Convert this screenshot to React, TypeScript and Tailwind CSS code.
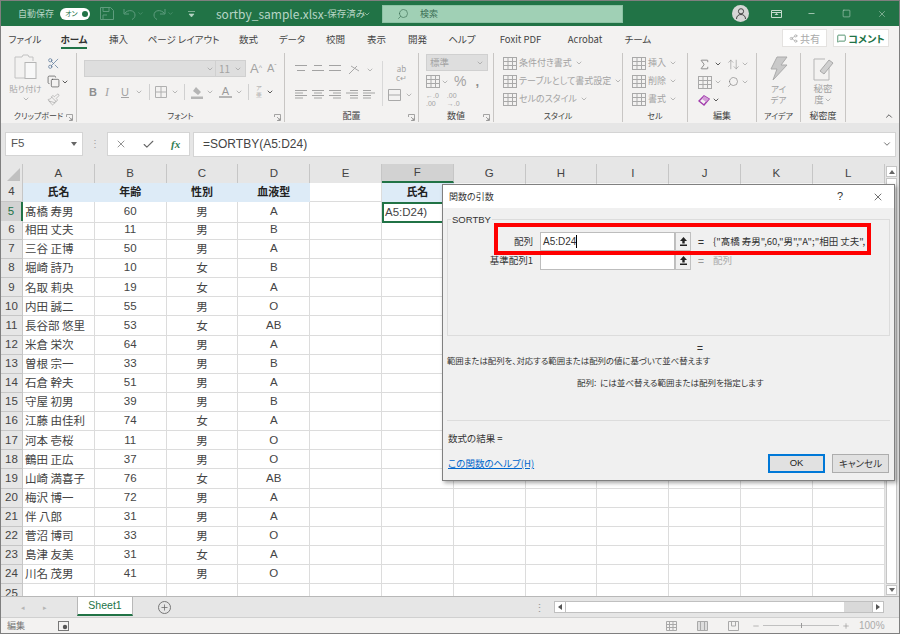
import React from 'react';
import { ChevronDown, Scissors, Copy, Paintbrush, Search, X, Check, Minus, Square, ChevronUp, Sigma, ArrowUpDown, Plus, MessageSquare, Share2 } from 'lucide-react';

const font = "[font-family:'Noto_Sans_CJK_JP','Liberation_Sans',sans-serif]";

const tabs: [string, string][] = [
  ['ファイル', 'w-[28px]'],
  ['ホーム', 'w-[26px]'],
  ['挿入', 'w-[19px]'],
  ['ページ レイアウト', 'w-[67px]'],
  ['数式', 'w-[19px]'],
  ['データ', 'w-[24px]'],
  ['校閲', 'w-[19px]'],
  ['表示', 'w-[19px]'],
  ['開発', 'w-[19px]'],
  ['ヘルプ', 'w-[26px]'],
  ['Foxit PDF', 'w-[47px]'],
  ['Acrobat', 'w-[38px]'],
  ['チーム', 'w-[24px]'],
];

const people: [string, string, string, string][] = [
  ['髙橋 寿男', '60', '男', 'A'],
  ['相田 丈夫', '11', '男', 'B'],
  ['三谷 正博', '50', '男', 'A'],
  ['堀崎 詩乃', '10', '女', 'B'],
  ['名取 莉央', '19', '女', 'A'],
  ['内田 誠二', '55', '男', 'O'],
  ['長谷部 悠里', '53', '女', 'AB'],
  ['米倉 栄次', '64', '男', 'A'],
  ['曽根 宗一', '33', '男', 'B'],
  ['石倉 幹夫', '51', '男', 'A'],
  ['守屋 初男', '39', '男', 'B'],
  ['江藤 由佳利', '74', '女', 'A'],
  ['河本 壱桜', '11', '男', 'O'],
  ['鶴田 正広', '37', '男', 'O'],
  ['山崎 満喜子', '76', '女', 'AB'],
  ['梅沢 博一', '72', '男', 'A'],
  ['伴 八郎', '31', '男', 'A'],
  ['菅沼 博司', '33', '男', 'O'],
  ['島津 友美', '31', '女', 'A'],
  ['川名 茂男', '41', '男', 'O'],
];

const columns = ['A', 'B', 'C', 'D', 'E', 'F', 'G', 'H', 'I', 'J', 'K', 'L'];
const headRow = ['氏名', '年齢', '性別', '血液型'];
const gridCols = 'grid grid-cols-[22px_repeat(12,71.8px)]';

const Chev = ({ className = '' }: { className?: string }) => (
  <ChevronDown size={8} strokeWidth={2} className={`shrink-0 text-[#9a9a9a] ${className}`} />
);

// 横線を並べた配置アイコン
const LinesIcon = ({ rows }: { rows: [number, number][] }) => (
  <svg width="12" height="12" viewBox="0 0 12 12" className="shrink-0">
    {rows.map(([x, w], i) => (
      <rect key={i} x={x} y={1 + i * (10 / Math.max(rows.length, 1))} width={w} height="1" fill="#a3a3a3" />
    ))}
  </svg>
);

const BoxIcon = ({ tone = '#a9a9a9' }: { tone?: string }) => (
  <svg width="14" height="13" viewBox="0 0 14 13" className="shrink-0">
    <rect x="0.5" y="0.5" width="13" height="12" fill="none" stroke={tone} />
    <path d="M0 4.5h14M0 8.5h14M5 0v13M9.5 0v13" stroke={tone} strokeWidth="1" />
  </svg>
);

const Group = ({ width, label, launcher, small, children }: { width: string; label: string; launcher?: boolean; small?: boolean; children: React.ReactNode }) => (
  <div className={`${width} flex flex-col shrink-0 border-r border-[#c8c6c4] h-[69px] my-auto`}>
    <div className="flex-1 min-h-0">{children}</div>
    <div className={`relative h-[14px] pt-[1px] text-center leading-[14px] text-[#444] whitespace-nowrap ${small ? 'text-[8px]' : 'text-[9px]'}`}>
      {label}
      {launcher && (
        <svg width="7" height="7" viewBox="0 0 7 7" className="absolute right-[3px] bottom-[1px]">
          <path d="M0.5 3V0.5H6.5V6.5H3M3 3l3 3M4 6h2V4" fill="none" stroke="#8f8f8f" strokeWidth="0.8" />
        </svg>
      )}
    </div>
  </div>
);

const RibbonLine = ({ text, tone = '#a9a9a9' }: { text: string; tone?: string }) => (
  <div className="flex items-center gap-[2px] h-[18px] text-[9px] whitespace-nowrap text-[#a3a3a3]">
    <BoxIcon tone={tone} />
    <span>{text}</span>
    <Chev className="ml-[1px]" />
  </div>
);

const Ribbon = () => (
  <div className="flex h-[71px] bg-[#f3f2f1] pl-0 shadow-[0_1px_2px_rgba(0,0,0,0.25)]">
    <Group width="w-[76px]" label="クリップボード" launcher small>
      <div className="flex pl-[9px] pt-[1px] gap-[6px]">
        <div className="flex flex-col items-center w-[31px] text-[#a8a8a8]">
          <svg width="24" height="26" viewBox="0 0 24 26">
            <path d="M4 3h4l1-2h5l1 2h4v4M12 24H1V3h3" fill="none" stroke="#c2c2c2" strokeWidth="1" />
            <rect x="11" y="8.5" width="11" height="16" fill="#f8f8f8" stroke="#b5b5b5" />
          </svg>
          <span className="text-[8.5px] leading-[12px] mt-[2px] whitespace-nowrap">貼り付け</span>
          <Chev className="mt-[1px]" />
        </div>
        <div className="flex flex-col gap-[5px] pt-[3px]">
          <Scissors size={13} className="text-[#4a6a90]" strokeWidth={1.2} />
          <div className="flex items-center gap-[1px]">
            <Copy size={13} className="text-[#444]" strokeWidth={1.2} />
            <ChevronDown size={8} className="text-[#333]" strokeWidth={2.4} />
          </div>
          <Paintbrush size={13} className="text-[#a3a3a3]" strokeWidth={1.2} />
        </div>
      </div>
    </Group>
    <Group width="w-[208px]" label="フォント" launcher small>
      <div className="pl-[7px] pt-[7px]">
        <div className="flex items-center h-[17px]">
          <div className="w-[132px] h-[17px] bg-[#dedede] border border-[#d0d0d0] flex items-center justify-end pr-[1px]"><Chev /></div>
          <div className="w-[30px] h-[17px] bg-[#dedede] border border-[#d0d0d0] border-l-0 flex items-center justify-between px-[3px] text-[10px] text-[#a3a3a3]"><span>11</span><Chev /></div>
          <span className="ml-[4px] text-[13px] text-[#a3a3a3] leading-none font-['Liberation_Sans']">A<sup className="text-[7px]">^</sup></span>
          <span className="ml-[5px] text-[11px] text-[#a3a3a3] leading-none font-['Liberation_Sans']">A<sup className="text-[7px]">ˇ</sup></span>
        </div>
        <div className="flex items-center h-[18px] mt-[6px] pl-[5px] text-[#a3a3a3] text-[11px] font-['Liberation_Sans']">
          <b className="w-[16px] text-[#8f8f8f]">B</b>
          <i className="w-[16px] font-['Liberation_Serif'] text-[12px]">I</i>
          <u className="w-[14px]">U</u>
          <Chev />
          <div className="w-px h-[16px] bg-[#d0d0d0] ml-[6px] mr-[5px]" />
          <svg width="12" height="12" viewBox="0 0 12 12"><path d="M0.5.5h11v11H.5zM6 0v12M0 6h12" fill="none" stroke="#b0b0b0" /></svg>
          <Chev className="ml-[4px]" />
          <div className="w-px h-[16px] bg-[#d0d0d0] ml-[5px] mr-[5px]" />
          <svg width="13" height="13" viewBox="0 0 13 13"><path d="M6 1l5 5-3 3-5-4zM1 10.5h12V13H1z" fill="#b5b5b5" /></svg>
          <Chev className="ml-[3px]" />
          <div className="flex flex-col items-center w-[13px] ml-[5px] leading-[10px] text-[#9a9a9a]"><span>A</span><div className="w-full h-[2px] bg-[#b5b5b5]" /></div>
          <Chev className="ml-[3px]" />
          <div className="w-px h-[16px] bg-[#d0d0d0] ml-[5px] mr-[7px]" />
          <span className="flex flex-col text-[6px] leading-[7px] text-center">ア<span>亜</span></span>
          <ChevronDown size={8} className="ml-[4px] text-[#333]" strokeWidth={2.4} />
        </div>
      </div>
    </Group>
    <Group width="w-[134px]" label="配置" launcher>
      <div className="flex pl-[10px] pt-[8px]">
        <div className="flex flex-col gap-[9px] w-[86px]">
          <div className="flex items-center gap-[5px] h-[17px]">
            <LinesIcon rows={[[0, 12], [2, 8]]} />
            <LinesIcon rows={[[2, 8], [0, 12]]} />
            <LinesIcon rows={[[0, 12], [0, 12]]} />
            <svg width="13" height="12" viewBox="0 0 13 12" className="ml-[2px]"><path d="M1 10L9 2M3 2l8 5" fill="none" stroke="#a9a9a9" /></svg>
            <Chev />
          </div>
          <div className="flex items-center gap-[5px] h-[16px]">
            <LinesIcon rows={[[0, 12], [0, 8], [0, 12], [0, 8]]} />
            <LinesIcon rows={[[0, 12], [2, 8], [0, 12], [2, 8]]} />
            <LinesIcon rows={[[0, 12], [4, 8], [0, 12], [4, 8]]} />
            <LinesIcon rows={[[4, 8], [0, 12], [4, 8], [4, 8]]} />
            <LinesIcon rows={[[0, 8], [0, 12], [0, 8], [0, 8]]} />
          </div>
        </div>
        <div className="w-px h-[45px] bg-[#d8d8d8] ml-[1px] mr-[5px]" />
        <div className="flex flex-col gap-[7px]">
          <span className="text-[8px] leading-[9px] text-[#a3a3a3] text-center pl-[2px] pt-[3px]">ab<br />c↵</span>
          <div className="flex items-center gap-[4px]">
            <svg width="13" height="12" viewBox="0 0 13 12"><path d="M.5.5h12v11H.5zM0 6h13" fill="none" stroke="#a9a9a9" /></svg>
            <Chev />
          </div>
        </div>
      </div>
    </Group>
    <Group width="w-[75px]" label="数値" launcher>
      <div className="pl-[7px] pt-[1px] text-[#a3a3a3]">
        <div className="w-[62px] h-[17px] bg-[#dedede] border border-[#d0d0d0] flex items-center justify-between px-[3px] text-[9.5px]"><span>標準</span><Chev /></div>
        <div className="flex items-center h-[19px] mt-[1px] text-[13px] font-['Liberation_Sans']">
          <BoxIcon />
          <Chev className="ml-[1px]" />
          <span className="ml-[5px] text-[14px]">%</span>
          <span className="ml-[9px] font-bold text-[#8f8f8f]">,</span>
        </div>
        <div className="flex text-[7px] leading-[8px] h-[17px] items-center gap-[8px] font-['Liberation_Sans']">
          <span>←.0<br />.00</span>
          <span>.00<br />→.0</span>
        </div>
      </div>
    </Group>
    <Group width="w-[129px]" label="スタイル" small>
      <div className="pl-[9px] pt-[1px]">
        <RibbonLine text="条件付き書式" />
        <RibbonLine text="テーブルとして書式設定" />
        <RibbonLine text="セルのスタイル" />
      </div>
    </Group>
    <Group width="w-[65px]" label="セル" small>
      <div className="pl-[9px] pt-[1px]">
        <RibbonLine text="挿入" />
        <RibbonLine text="削除" />
        <RibbonLine text="書式" />
      </div>
    </Group>
    <Group width="w-[69px]" label="編集">
      <div className="grid grid-cols-[29px_1fr] pl-[10px] pt-[2px] auto-rows-[18px] items-center text-[#555]">
        <div className="flex items-center gap-[3px]"><Sigma size={13} strokeWidth={1.2} /><ChevronDown size={8} strokeWidth={2.4} className="text-[#333]" /></div>
        <div className="flex items-center gap-[1px]"><ArrowUpDown size={13} strokeWidth={1.2} className="text-[#999]" /><Chev /></div>
        <div className="flex items-center gap-[2px]"><BoxIcon /><Chev /></div>
        <div className="flex items-center gap-[2px]"><Search size={12} strokeWidth={1.2} className="text-[#777] -scale-x-100" /><Chev /></div>
        <div className="flex items-center gap-[2px]">
          <svg width="12" height="11" viewBox="0 0 12 11"><path d="M1 6l5-5 5 3-5 6z" fill="none" stroke="#a23dad" strokeWidth="1.4" /><path d="M6 1l5 3-3 3-4-3z" fill="#d39cd8" /></svg>
          <ChevronDown size={8} strokeWidth={2.4} className="text-[#333]" />
        </div>
      </div>
    </Group>
    <Group width="w-[44px]" label="アイデア" small>
      <div className="flex flex-col items-center pt-[3px] text-[8.5px] leading-[11px] text-[#a3a3a3]">
        <svg width="18" height="25" viewBox="0 0 18 25"><path d="M7 1h10L11 9h6L3 24l4-11H1z" fill="#c9c9c9" stroke="#ababab" /></svg>
        <span className="mt-[2px]">アイ</span>
        <span>デア</span>
      </div>
    </Group>
    <Group width="w-[45px]" label="秘密度">
      <div className="flex flex-col items-center pt-[3px] text-[9.5px] leading-[11px] text-[#a3a3a3]">
        <svg width="21" height="25" viewBox="0 0 21 25"><path d="M1 3h11M1 3v21h15V11" fill="none" stroke="#b5b5b5" /><path d="M7 15l9-11 4 3-9 11z" fill="#d0d0d0" stroke="#a9a9a9" /></svg>
        <span className="mt-[2px]">秘密</span>
        <span className="flex items-center">度<Chev /></span>
      </div>
    </Group>
    <div className="flex-1 flex items-end justify-end pr-[5px] pb-[2px]">
      <ChevronUp size={10} strokeWidth={2} className="text-[#444]" />
    </div>
  </div>
);

const FormulaBar = () => (
  <div className="flex items-center h-[34px] bg-[#e6e6e6] pt-[9px] pb-[1px] pl-[4px] pr-[3px] shrink-0">
    <div className="w-[78px] h-[24px] bg-white border border-[#d4d4d4] flex items-center justify-between pl-[5px] pr-[5px] text-[11.5px] text-[#555] font-['Liberation_Sans']">
      <span>F5</span>
      <svg width="6" height="4" viewBox="0 0 6 4"><path d="M0 0h6L3 4z" fill="#666" /></svg>
    </div>
    <span className="w-[24px] text-center text-[#a0a0a0] text-[10px] leading-[4px] pb-[2px]">⋮</span>
    <div className="w-[83px] h-[24px] bg-white border border-[#d4d4d4] flex items-center pl-[7px] text-[#666]">
      <X size={12} strokeWidth={1.4} />
      <Check size={13} strokeWidth={2} className="ml-[15px]" />
      <i className="ml-[16px] text-[11px] font-['Liberation_Serif'] font-bold text-[#2e7d52]">fx</i>
    </div>
    <div className="flex-1 h-[25px] ml-[3px] bg-white border border-[#d4d4d4] flex items-center justify-between pl-[9px] pr-[3px] text-[12px] text-[#444] font-['Liberation_Sans']">
      <span>=SORTBY(A5:D24)</span>
      <ChevronDown size={10} strokeWidth={2} className="text-[#555]" />
    </div>
  </div>
);

const Sheet = () => (
  <div className="flex-1 min-h-0 flex bg-[#e6e6e6] pt-[7px] overflow-hidden">
    <div className="w-[884px] overflow-hidden text-[11.5px]">
      <div className={`${gridCols} h-[18.5px] bg-[#e6e6e6] font-['Liberation_Sans'] text-[#444]`}>
        <div className="border-r border-[#c6c6c6] flex items-end justify-end pr-[2px] pb-[2px]">
          <svg width="13" height="13" viewBox="0 0 13 13"><path d="M13 0v13H0z" fill="#c0c0c0" /></svg>
        </div>
        {columns.map((c) => (
          <div key={c} className={`flex items-center justify-center border-r border-[#c6c6c6] ${c === 'F' ? 'bg-[#d2d2d2] border-b-2 border-b-[#217346]' : ''}`}>{c}</div>
        ))}
      </div>
      {/* 4行目(見出し) */}
      <div className={`${gridCols} h-[19.14px] bg-white`}>
        <div className="bg-[#e6e6e6] border-r border-b border-[#c6c6c6] flex items-center justify-center text-[#444] font-['Liberation_Sans']">4</div>
        {columns.map((c, i) => {
          const label = i < 4 ? headRow[i] : c === 'F' ? '氏名' : '';
          const blue = i < 4 || c === 'F';
          return (
            <div key={c} className={`flex items-center justify-center border-r border-b font-bold text-[11px] text-[#222] ${blue ? 'bg-[#ddebf7] border-[#ddebf7]' : 'border-[#dcdcdc]'}`}>{label}</div>
          );
        })}
      </div>
      {Array.from({ length: 21 }, (_, n) => {
        const row = n + 5;
        const data = people[n];
        return (
          <div key={row} className={`${gridCols} h-[19.14px] bg-white text-[#444]`}>
            <div className={`border-r border-b border-[#c6c6c6] flex items-center justify-center text-[11.5px] font-['Liberation_Sans'] ${row === 5 ? 'bg-[#d2d2d2] border-r-2 border-r-[#217346] text-[#217346]' : 'bg-[#e6e6e6]'}`}>{row}</div>
            {columns.map((c, i) => {
              const selected = row === 5 && c === 'F';
              const value = data && i < 4 ? data[i] : '';
              if (selected) {
                return (
                  <div key={c} className="flex items-center border-2 border-[#217346] pl-[1px] whitespace-nowrap font-['Liberation_Sans']">A5:D24)</div>
                );
              }
              return (
                <div key={c} className={`flex items-center border-r border-b border-[#dcdcdc] whitespace-nowrap ${i === 0 ? 'pl-[2px]' : 'justify-center'} ${i === 1 || i === 3 ? "font-['Liberation_Sans']" : ''}`}>
                  {value}
                </div>
              );
            })}
          </div>
        );
      })}
    </div>
    <div className="flex-1 flex flex-col gap-[1px] pl-[1px] pr-[2px] pt-[2px] pb-[1px]">
      <div className="h-[11px] bg-white border border-[#c6c6c6] flex items-center justify-center">
        <svg width="6" height="4" viewBox="0 0 6 4"><path d="M3 0l3 4H0z" fill="#666" /></svg>
      </div>
      <div className="flex-1 bg-white border border-[#c6c6c6]" />
      <div className="h-[10px] bg-white border border-[#c6c6c6] flex items-center justify-center">
        <svg width="6" height="4" viewBox="0 0 6 4"><path d="M0 0h6L3 4z" fill="#666" /></svg>
      </div>
    </div>
  </div>
);

const TabBar = () => (
  <div className="flex items-center h-[21px] bg-[#e6e6e6] border-t border-[#b8b8b8] text-[#b5b5b5] shrink-0">
    <span className="ml-[20px] text-[7px]">◂</span>
    <span className="ml-[18px] text-[7px]">▸</span>
    <div className="ml-[30px] w-[56px] h-[19px] self-start bg-white border-x border-[#b8b8b8] border-b-2 border-b-[#217346] flex items-center justify-center text-[10.5px] text-[#217346] font-['Liberation_Sans']">Sheet1</div>
    <div className="ml-[25px] w-[13px] h-[13px] rounded-full border border-[#777] flex items-center justify-center text-[#666]"><Plus size={9} strokeWidth={2} /></div>
    <span className="ml-[363px] text-[#999] text-[11px]">⋮</span>
    <div className="ml-[9px] flex h-[12px] w-[330px] border border-[#c0c0c0] bg-[#d9d9d9]">
      <div className="w-[11px] bg-white border-r border-[#c0c0c0] flex items-center justify-center">
        <svg width="4" height="6" viewBox="0 0 4 6"><path d="M4 0v6L0 3z" fill="#555" /></svg>
      </div>
      <div className="w-[278px] bg-white" />
      <div className="flex-1" />
      <div className="w-[11px] bg-white border-l border-[#c0c0c0] flex items-center justify-center">
        <svg width="4" height="6" viewBox="0 0 4 6"><path d="M0 0v6l4-3z" fill="#555" /></svg>
      </div>
    </div>
  </div>
);

const StatusBar = () => (
  <div className="flex items-center h-[16px] bg-[#f3f2f1] border-t border-[#d0d0d0] text-[#777] text-[9px] shrink-0">
    <span className="ml-[6px] w-[51px]">編集</span>
    <svg width="11" height="10" viewBox="0 0 11 10"><rect x=".5" y=".5" width="10" height="9" fill="none" stroke="#777" /><circle cx="7" cy="6" r="2.2" fill="#555" /></svg>
    <div className="ml-[597px] flex items-center gap-[20px] text-[#999]">
      <svg width="11" height="10" viewBox="0 0 11 10"><path d="M.5.5h10v9H.5zM0 3.5h11M0 6.5h11M3.5 0v10M7 0v10" fill="none" stroke="#a9a9a9" /></svg>
      <svg width="11" height="10" viewBox="0 0 11 10"><path d="M.5.5h10v9H.5zM3.5 0v10M7.5 0v10" fill="#ddd" stroke="#a9a9a9" /></svg>
      <svg width="11" height="10" viewBox="0 0 11 10"><path d="M.5.5h10v9H.5zM3.5 0v5h4V0" fill="none" stroke="#a9a9a9" /></svg>
    </div>
    <Minus size={8} className="ml-[13px] text-[#999]" />
    <div className="relative ml-[3px] w-[76px] h-px bg-[#c0c0c0]">
      <div className="absolute left-[38px] -top-[2px] w-px h-[5px] bg-[#999]" />
    </div>
    <Plus size={8} className="ml-[3px] text-[#999]" />
    <span className="ml-[9px] text-[#aaa] font-['Liberation_Sans'] text-[10px]">100%</span>
  </div>
);

const RefButton = () => (
  <div className="w-[16px] h-[19px] bg-[#f0f0f0] border border-[#c0c0c0] flex items-center justify-center">
    <svg width="9" height="9" viewBox="0 0 9 9"><path d="M4.5 0L8 4H5.7v2.5H3.3V4H1zM1 7.5h7V9H1z" fill="#222" /></svg>
  </div>
);

const ArgDialog = () => (
  <div className="absolute left-[441px] top-[183px] w-[453px] h-[297px] border border-[#808080] bg-[#f0f0f0] shadow-[2px_2px_4px_rgba(0,0,0,0.35)] text-[#333] text-[8.5px]">
    <div className="flex items-center h-[23px] bg-white pl-[6px] text-[9px]">
      <span className="flex-1">関数の引数</span>
      <span className="mr-[29px] text-[11px] font-['Liberation_Sans']">?</span>
      <X size={12} strokeWidth={1.4} className="mr-[10px]" />
    </div>
    <div className="relative mx-[4px] mt-[11px] h-[117px] border border-[#dcdcdc] pt-[12px]">
      <span className="absolute left-[3px] -top-[6px] bg-[#f0f0f0] px-[1px] text-[9.5px] leading-[11px] font-['Liberation_Sans']">SORTBY</span>
      <div className="flex items-center h-[19px]">
        <span className="w-[85px] text-right text-[9.5px]">配列</span>
        <div className="ml-[7px] w-[135px] h-[19px] bg-white border border-[#bdbdbd] pl-[2px] flex items-center text-[10px] font-['Liberation_Sans']">
          A5:D24<span className="w-px h-[13px] bg-black" />
        </div>
        <RefButton />
        <span className="ml-[7px] w-[15px] font-bold text-[10px]">=</span>
        <span className="whitespace-nowrap text-[9.5px]">{'{"髙橋 寿男",60,"男","A";"相田 丈夫",'}</span>
      </div>
      <div className="flex items-center h-[19px]">
        <span className="w-[85px] text-right text-[9.5px]">基準配列1</span>
        <div className="ml-[7px] w-[135px] h-[19px] bg-white border border-[#bdbdbd]" />
        <RefButton />
        <span className="ml-[7px] w-[15px] font-bold text-[10px] text-[#999]">=</span>
        <span className="text-[#aaa] text-[9.5px]">配列</span>
      </div>
    </div>
    <div className="pl-[254px] mt-[6px] h-[12px] leading-[12px] font-bold text-[10px]">=</div>
    <div className="pl-[4px] whitespace-nowrap leading-[12px] text-[8.4px]">範囲または配列を、対応する範囲または配列の値に基づいて並べ替えます</div>
    <div className="pl-[134px] mt-[10px] whitespace-nowrap leading-[12px]">配列:&nbsp;&nbsp;には並べ替える範囲または配列を指定します</div>
    <div className="mx-[4px] mt-[32px] h-px bg-[#dcdcdc]" />
    <div className="pl-[5px] mt-[11px] leading-[12px] text-[9.5px]">数式の結果 =</div>
    <div className="flex items-start mt-[10px] pl-[5px] pr-[5px]">
      <a className="mt-[3px] text-[9.5px] leading-[12px] text-[#0066cc] underline flex-1">この関数のヘルプ(H)</a>
      <div className="w-[57px] h-[19px] bg-[#e1e1e1] border-2 border-[#0078d7] flex items-center justify-center text-[9.5px] font-['Liberation_Sans'] text-[#222]">OK</div>
      <div className="ml-[7px] w-[57px] h-[19px] bg-[#e1e1e1] border border-[#adadad] flex items-center justify-center text-[9.5px]">キャンセル</div>
    </div>
    {/* 赤枠の強調 */}
    <div className="absolute left-[51px] top-[38px] w-[377px] h-[32px] border-[4px] border-[#ff0000]" />
  </div>
);

export default function App() {
  return (
    <div className={`relative w-[900px] h-[634px] overflow-hidden flex flex-col border border-[#7f7f7f] bg-[#e6e6e6] ${font} [font-feature-settings:'palt']`}>
      {/* タイトルバー */}
      <div className="flex items-center h-[25px] bg-[#217346] text-[#b7d5c5] shrink-0 whitespace-nowrap">
        <span className="ml-[17px] w-[36px] shrink-0 text-[9px]">自動保存</span>
        <div className="ml-[6px] w-[30px] h-[12px] shrink-0 rounded-full bg-white flex items-center justify-between pl-[5px] pr-[2px] text-[7px] text-[#217346]">
          <span>オン</span>
          <span className="w-[6px] h-[6px] rounded-full bg-[#217346]" />
        </div>
        <svg width="14" height="13" viewBox="0 0 14 13" className="ml-[10px] shrink-0"><path d="M.5.5h10l3 3v9H.5zM3 .5v4h6v-4M3 12.500V8h4" fill="none" stroke="#5f9c7e" /></svg>
        <svg width="13" height="12" viewBox="0 0 13 12" className="ml-[9px] shrink-0"><path d="M1 1v5h5M1.500 5.500C5 1 12 2 12 7c0 2-1 3.500-3 4.500" fill="none" stroke="#5f9c7e" /></svg>
        <ChevronDown size={7} className="ml-[1px] shrink-0 text-[#5f9c7e]" />
        <svg width="13" height="12" viewBox="0 0 13 12" className="ml-[9px] shrink-0"><path d="M12 1v5H7M11.500 5.500C8 1 1 2 1 7c0 2 1 3.500 3 4.500" fill="none" stroke="#5f9c7e" /></svg>
        <ChevronDown size={7} className="ml-[1px] shrink-0 text-[#5f9c7e]" />
        <svg width="7" height="6" viewBox="0 0 7 6" className="ml-[14px] shrink-0"><path d="M0 .5h7M1 3h5L3.500 6z" fill="#b7d5c5" stroke="#b7d5c5" strokeWidth=".6" /></svg>
        <div className="ml-[21px] w-[144px] shrink-0 flex items-center justify-between text-[12px]">
          <span>sortby_sample.xlsx</span>
          <span className="text-[10px]">-</span>
          <span className="text-[9.5px]">保存済み</span>
        </div>
        <ChevronDown size={8} className="ml-[3px] shrink-0" />
        <div className="ml-[11px] w-[241px] h-[18px] shrink-0 bg-[#a0d0b5] border border-[#8cc2a4] flex items-center pl-[14px] text-[#3c6f55] text-[9px]">
          <Search size={12} strokeWidth={1.3} className="-scale-x-100" />
          <span className="ml-[11px]">検索</span>
        </div>
        <div className="ml-[109px] w-[17px] h-[17px] shrink-0 rounded-full bg-[#d6d6d6] flex items-center justify-center">
          <svg width="10" height="11" viewBox="0 0 10 11"><circle cx="5" cy="3.300" r="2.600" fill="none" stroke="#444" /><path d="M.5 11c0-3 2-4.500 4.500-4.500S9.500 8 9.500 11" fill="none" stroke="#444" /></svg>
        </div>
        <svg width="11" height="8" viewBox="0 0 11 8" className="ml-[22px] shrink-0"><path d="M.5.500h10v7H.5zM0 2.500h11" fill="none" stroke="#c6dccf" /><path d="M5.500 3l2 2h-4z" fill="#c6dccf" /></svg>
        <Minus size={9} className="ml-[25px] shrink-0 text-[#c6dccf]" />
        <Square size={9} strokeWidth={1.4} className="ml-[26px] shrink-0 text-[#c6dccf]" />
        <X size={10} strokeWidth={1.3} className="ml-[26px] shrink-0 text-[#c6dccf]" />
      </div>
      {/* タブ */}
      <div className="flex items-center h-[26px] bg-[#f3f2f1] pl-[10px] gap-[22px] text-[9.5px] text-[#444] shrink-0 relative">
        {tabs.map(([t, w]) => (
          <div key={t} className={`${w} flex justify-center whitespace-nowrap ${t === 'ホーム' ? 'font-bold border-b-2 border-[#217346] pb-[1px] mt-[3px] text-[#333]' : ''}`}>
            {t}
          </div>
        ))}
        <div className="absolute left-[781px] top-[3px] flex items-center gap-[6px]">
          <div className="w-[45px] h-[18px] bg-white border border-[#e4e2e0] flex items-center justify-center gap-[2px] text-[#aaa] text-[10px]">
            <Share2 size={9} />共有
          </div>
          <div className="w-[56px] h-[18px] bg-white border border-[#e4e2e0] flex items-center justify-center gap-[2px] font-bold text-[#217346] text-[10px]">
            <MessageSquare size={9} />コメント
          </div>
        </div>
      </div>
      <Ribbon />
      <FormulaBar />
      <Sheet />
      <TabBar />
      <StatusBar />
      <ArgDialog />
    </div>
  );
}
